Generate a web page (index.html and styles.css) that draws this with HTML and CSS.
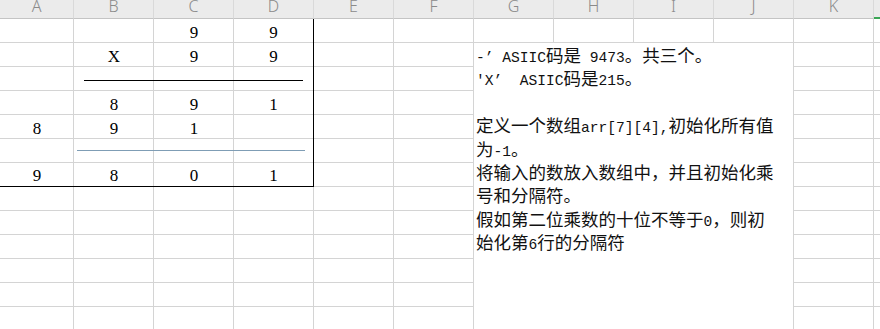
FILE: index.html
```html
<!DOCTYPE html>
<html>
<head>
<meta charset="utf-8">
<title>Sheet1</title>
<link rel="stylesheet" href="styles.css">
</head>
<body>

<div id="colhead">
	<div class="hd first">A</div>
	<div class="hd">B</div>
	<div class="hd">C</div>
	<div class="hd">D</div>
	<div class="hd">E</div>
	<div class="hd">F</div>
	<div class="hd">G</div>
	<div class="hd">H</div>
	<div class="hd">I</div>
	<div class="hd">J</div>
	<div class="hd">K</div>
	<div class="hd sel"></div>
</div>

<div id="sheet">
	<div id="calc">
		<div class="cell"></div><div class="cell"></div><div class="cell">9</div><div class="cell">9</div>
		<div class="cell"></div><div class="cell">X</div><div class="cell">9</div><div class="cell">9</div>
		<div class="cell"></div><div class="cell"></div><div class="cell"></div><div class="cell"></div>
		<div class="cell"></div><div class="cell">8</div><div class="cell">9</div><div class="cell">1</div>
		<div class="cell">8</div><div class="cell">9</div><div class="cell">1</div><div class="cell"></div>
		<div class="cell"></div><div class="cell"></div><div class="cell"></div><div class="cell"></div>
		<div class="cell">9</div><div class="cell">8</div><div class="cell">0</div><div class="cell">1</div>

		<div class="rule"></div>
		<div class="rule blue"></div>
	</div>

	<div id="note">
		<div><span class="en">-’ ASIIC</span>码是<span class="en"> 9473</span>。共三个。</div>
		<div><span class="en">'X’  ASIIC</span>码是<span class="en">215</span>。</div>
		<div></div>
		<div>定义一个数组<span class="en">arr[7][4],</span>初始化所有值</div>
		<div>为<span class="en">-1</span>。</div>
		<div>将输入的数放入数组中，并且初始化乘</div>
		<div>号和分隔符。</div>
		<div>假如第二位乘数的十位不等于<span class="en">0</span>，则初</div>
		<div>始化第<span class="en">6</span>行的分隔符</div>
	</div>
</div>

</body>
</html>
```

FILE: styles.css
```css
body {
	margin: 0;
	padding: 0;
	width: 880px;
	height: 329px;
	overflow: hidden;
	background-color: #fff;
}

#colhead {
	display: flex;
	height: 19px;
	background-color: #ebebeb;
}

.hd {
	flex: 0 0 80px;
	box-sizing: border-box;
	border-right: 1px solid #d9d9d9;
	border-bottom: 1px solid #c4c4c4;
	text-align: center;
	font: 300 16px/13px "Noto Sans", sans-serif;
	color: #8a8a8a;
}

.hd.first {
	flex-basis: 74px;
}

.hd.sel {
	flex-basis: 6px;
	border-right: 0;
	border-bottom: 2px solid #3aa655;
}

#sheet {
	display: grid;
	grid-template-columns: 74px repeat(10, 80px) 6px;
	grid-auto-rows: 24px;
	height: 310px;
	background-image:
		repeating-linear-gradient(to right, transparent 0 79px, #d4d4d4 79px 80px),
		repeating-linear-gradient(to bottom, transparent 0 23px, #d4d4d4 23px 24px);
	background-position: -6px 0, 0 0;
}

#calc {
	grid-column: 1 / 5;
	grid-row: 1 / 8;
	position: relative;
	display: grid;
	grid-template-columns: 74px 80px 80px 79px;
	grid-template-rows: repeat(6, 24px) 23px;
	border-right: 1px solid #000;
	border-bottom: 1px solid #000;
}

.cell {
	display: flex;
	align-items: center;
	justify-content: center;
	box-sizing: border-box;
	padding-top: 3px;
	font: 17px "Liberation Serif", serif;
	color: #000;
}

.rule {
	position: absolute;
	left: 84px;
	top: 61px;
	width: 219px;
	height: 1px;
	background-color: #000;
}

.rule.blue {
	left: 77px;
	top: 131px;
	width: 228px;
	background-color: #7f9db5;
}

#note {
	grid-column: 7 / 11;
	grid-row: 2 / span 12;
	background-color: #fff;
	border-right: 1px solid #d4d4d4;
	padding-left: 2px;
	font: 17.5px/23.4px "Noto Sans CJK SC", sans-serif;
	color: #111;
}

#note div {
	height: 23.4px;
	white-space: pre;
}

.en {
	font: 14.6px/1 "Liberation Mono", monospace;
}
```
